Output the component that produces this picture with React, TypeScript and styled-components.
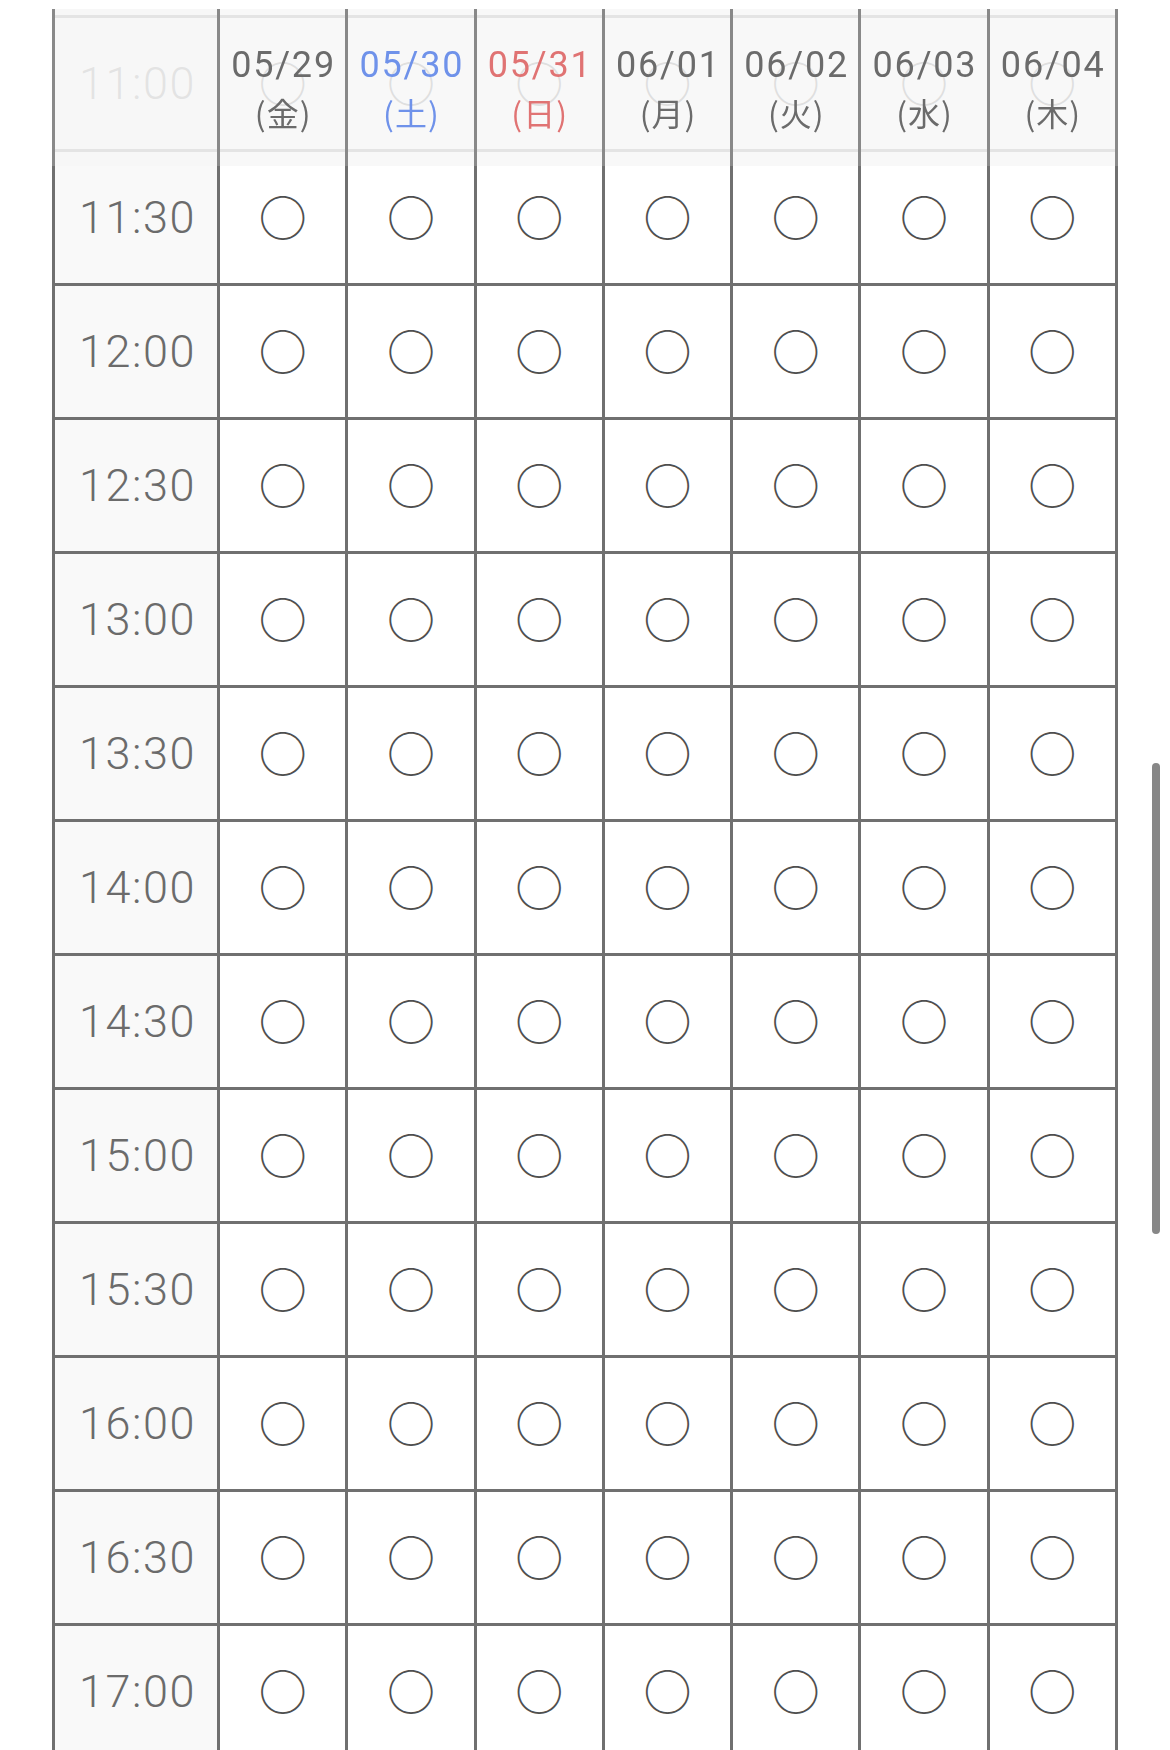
import React, { useLayoutEffect, useRef } from 'react';
import styled, { createGlobalStyle } from 'styled-components';

type Tone = 'plain' | 'sat' | 'sun';

interface Day {
  date: string;
  dow: string;
  tone: Tone;
}

const DAYS: Day[] = [
  { date: '05/29', dow: '金', tone: 'plain' },
  { date: '05/30', dow: '土', tone: 'sat' },
  { date: '05/31', dow: '日', tone: 'sun' },
  { date: '06/01', dow: '月', tone: 'plain' },
  { date: '06/02', dow: '火', tone: 'plain' },
  { date: '06/03', dow: '水', tone: 'plain' },
  { date: '06/04', dow: '木', tone: 'plain' },
];

const TIMES: string[] = [];
for (let h = 10; h <= 19; h++) {
  TIMES.push(`${h}:00`);
  if (h < 19) TIMES.push(`${h}:30`);
}

const SCROLL_OFFSET = 419;

const toneColor = (tone: Tone) =>
  tone === 'sat' ? '#6f92ea' : tone === 'sun' ? '#e07373' : '#6b6b6b';

const GlobalStyle = createGlobalStyle`
  html, body {
    margin: 0;
    padding: 0;
    background: #ffffff;
  }
  body {
    font-family: Roboto, "Noto Sans CJK JP", sans-serif;
    -webkit-font-smoothing: antialiased;
  }
`;

const Screen = styled.div`
  position: relative;
  width: 100%;
  height: 100vh;
  overflow: hidden;
  background: #ffffff;
`;

const Scroller = styled.div`
  height: 100%;
  overflow-y: auto;
  scrollbar-width: none;
  &::-webkit-scrollbar {
    display: none;
  }
`;

const Sheet = styled.div`
  width: 1066px;
  margin-left: 52px;
`;

const StickyHead = styled.div`
  position: sticky;
  top: 0;
  z-index: 2;
  padding-top: 9px;
  background: linear-gradient(#ffffff, #ffffff) top left / 100% 9px no-repeat;
`;

const HeadGrid = styled.div`
  display: grid;
  grid-template-columns: 162px repeat(7, 1fr);
  column-gap: 3px;
  padding: 0 3px;
  height: 157px;
  background: rgba(255, 255, 255, 0.18);
`;

const HeadCell = styled.div<{ $tone: Tone }>`
  display: flex;
  flex-direction: column;
  align-items: center;
  justify-content: center;
  background: rgba(247, 247, 247, 0.83);
  color: ${(p) => toneColor(p.$tone)};
`;

const DateText = styled.span`
  font-family: Roboto, "Noto Sans CJK JP", sans-serif;
  font-size: 36px;
  line-height: 48px;
  letter-spacing: 1.8px;
  margin-right: -1.8px;
`;

const DowText = styled.span`
  font-family: "Noto Sans CJK JP", sans-serif;
  font-size: 32px;
  line-height: 46px;
  letter-spacing: 1px;
  margin-right: -1px;
`;

const BodyGrid = styled.div`
  display: grid;
  grid-template-columns: 162px repeat(7, 1fr);
  grid-auto-rows: 131px;
  gap: 3px;
  padding: 3px;
  background: #707070;
`;

const TimeCell = styled.div`
  display: flex;
  align-items: center;
  justify-content: center;
  background: #f9f9f9;
  color: #6b6b6b;
  font-family: Roboto, sans-serif;
  font-weight: 300;
  font-size: 45px;
  letter-spacing: 1.5px;
  padding-left: 3px;
`;

const SlotCell = styled.div`
  display: flex;
  align-items: center;
  justify-content: center;
  background: #ffffff;
`;

const Mark = styled.span`
  font-family: "Noto Sans CJK JP", sans-serif;
  font-size: 48px;
  line-height: 1;
  color: #4f4f4f;
  margin-top: -5px;
`;

const ScrollThumb = styled.div`
  position: absolute;
  top: 763px;
  right: 10px;
  width: 8px;
  height: 471px;
  border-radius: 4px;
  background: #878787;
`;

export default function App() {
  const scrollRef = useRef<HTMLDivElement>(null);

  useLayoutEffect(() => {
    if (scrollRef.current) scrollRef.current.scrollTop = SCROLL_OFFSET;
  }, []);

  return (
    <>
      <GlobalStyle />
      <Screen>
        <Scroller ref={scrollRef}>
          <Sheet>
            <StickyHead>
              <HeadGrid>
                <HeadCell $tone="plain" />
                {DAYS.map((d) => (
                  <HeadCell key={d.date} $tone={d.tone}>
                    <DateText>{d.date}</DateText>
                    <DowText>({d.dow})</DowText>
                  </HeadCell>
                ))}
              </HeadGrid>
            </StickyHead>
            <BodyGrid>
              {TIMES.map((t) => (
                <React.Fragment key={t}>
                  <TimeCell>{t}</TimeCell>
                  {DAYS.map((d) => (
                    <SlotCell key={d.date}>
                      <Mark>○</Mark>
                    </SlotCell>
                  ))}
                </React.Fragment>
              ))}
            </BodyGrid>
          </Sheet>
        </Scroller>
        <ScrollThumb />
      </Screen>
    </>
  );
}
